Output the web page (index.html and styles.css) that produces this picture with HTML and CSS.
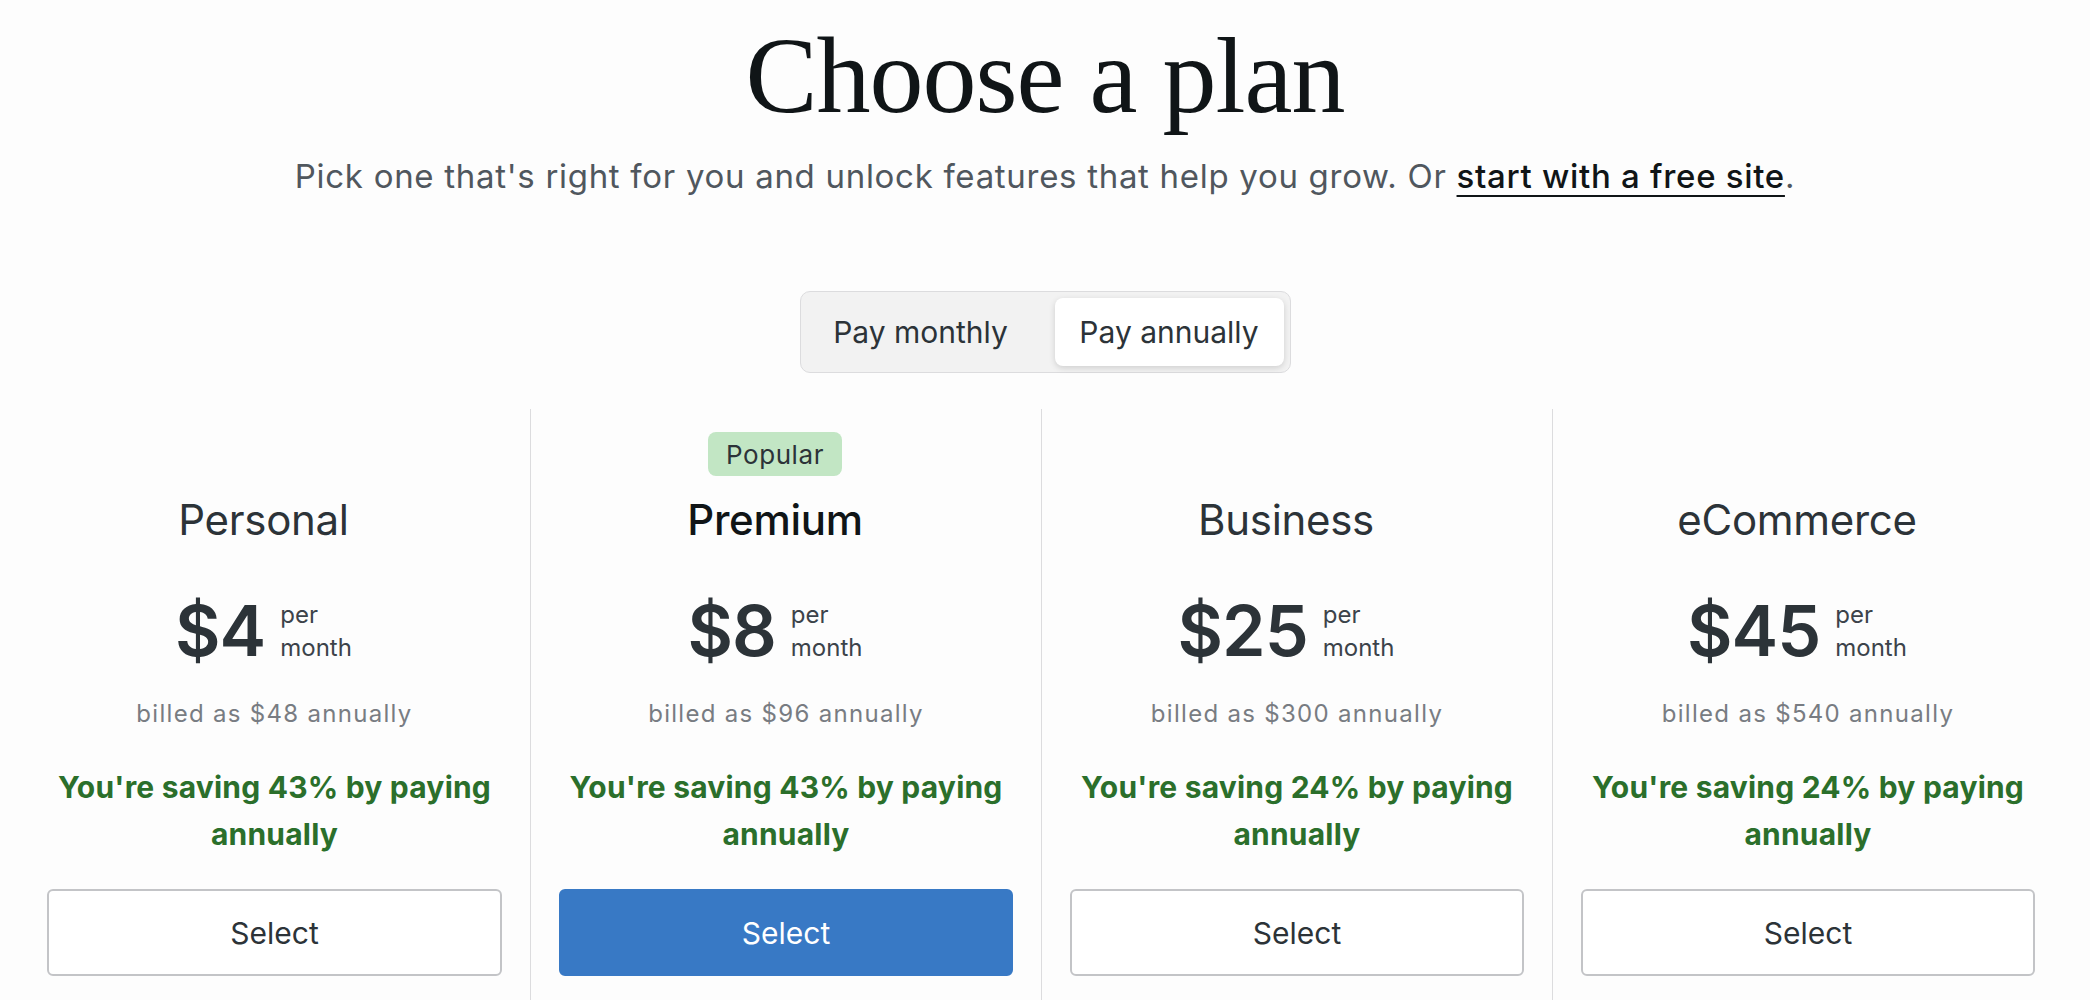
FILE: index.html
```html
<!DOCTYPE html>
<html lang="en">
<head>
<meta charset="utf-8">
<title>Choose a plan</title>
<link rel="stylesheet" href="styles.css">
</head>
<body>
<header class="intro">
  <h1 class="title">Choose a plan</h1>
  <p class="subtitle">Pick one that's right for you and unlock features that help you grow. Or <a class="link" href="#">start with a free site</a>.</p>
</header>
<div class="toggle-wrap">
  <div class="toggle">
    <button class="seg">Pay monthly</button>
    <button class="seg seg-active">Pay annually</button>
  </div>
</div>
<section class="plans">
  <div class="plan">
    <div class="badge-slot"></div>
    <h2 class="name">Personal</h2>
    <div class="price"><span class="amount">$4</span><span class="period">per<br>month</span></div>
    <p class="billed">billed as $48 annually</p>
    <p class="saving">You're saving 43% by paying annually</p>
    <button class="select">Select</button>
  </div>
  <div class="plan">
    <div class="badge-slot"><span class="badge">Popular</span></div>
    <h2 class="name name-strong">Premium</h2>
    <div class="price"><span class="amount">$8</span><span class="period">per<br>month</span></div>
    <p class="billed">billed as $96 annually</p>
    <p class="saving">You're saving 43% by paying annually</p>
    <button class="select select-primary">Select</button>
  </div>
  <div class="plan">
    <div class="badge-slot"></div>
    <h2 class="name">Business</h2>
    <div class="price"><span class="amount">$25</span><span class="period">per<br>month</span></div>
    <p class="billed">billed as $300 annually</p>
    <p class="saving">You're saving 24% by paying annually</p>
    <button class="select">Select</button>
  </div>
  <div class="plan">
    <div class="badge-slot"></div>
    <h2 class="name">eCommerce</h2>
    <div class="price"><span class="amount">$45</span><span class="period">per<br>month</span></div>
    <p class="billed">billed as $540 annually</p>
    <p class="saving">You're saving 24% by paying annually</p>
    <button class="select">Select</button>
  </div>
</section>
</body>
</html>
```
FILE: styles.css
```css
* { box-sizing: border-box; }
html, body { margin: 0; padding: 0; }
body {
  background: #fdfdfd;
  font-family: Inter, "Noto Sans", "Liberation Sans", sans-serif;
  color: #2c3338;
  width: 2090px;
  height: 1000px;
  overflow: hidden;
}
.intro { text-align: center; }
.title {
  font-family: "Liberation Serif", "DejaVu Serif", serif;
  font-weight: 400;
  font-size: 108px;
  line-height: 124px;
  margin: 14px 0 0;
  color: #101517;
  letter-spacing: -1px;
}
.subtitle {
  margin: 18px 0 0;
  font-size: 33px;
  line-height: 40px;
  color: #50575e;
  letter-spacing: 0.7px;
}
.link {
  color: #101517;
  font-weight: 500;
  text-decoration: underline;
  text-decoration-thickness: 2px;
  text-underline-offset: 7px;
}
.toggle-wrap {
  display: flex;
  justify-content: center;
  margin-top: 95px;
}
.toggle {
  display: flex;
  gap: 20px;
  padding: 6px;
  background: #f2f2f2;
  border: 1px solid #dcdcde;
  border-radius: 10px;
  width: 491px;
  height: 82px;
}
.seg {
  flex: 1;
  border: 0;
  background: transparent;
  font-family: inherit;
  font-size: 30px;
  color: #2c3338;
  border-radius: 8px;
  padding: 0;
}
.seg-active {
  flex: 0 0 229px;
  background: #ffffff;
  box-shadow: 0 2px 6px rgba(0, 0, 0, 0.15);
}
.plans {
  display: grid;
  grid-template-columns: repeat(4, 1fr);
  width: 2044px;
  margin: 36px 0 0 19px;
  height: 600px;
}
.plan {
  display: flex;
  flex-direction: column;
  align-items: center;
  padding: 23px 28px 0;
  text-align: center;
}
.plan + .plan { border-left: 1px solid #dcdcde; }
.badge-slot {
  height: 44px;
  display: flex;
  justify-content: center;
  margin-right: 22px;
}
.badge {
  display: inline-flex;
  align-items: center;
  height: 44px;
  padding: 0 18px;
  background: #c2e6c4;
  border-radius: 8px;
  font-size: 26px;
  letter-spacing: 0.6px;
  color: #2c3338;
}
.name {
  margin: 17px 22px 0 0;
  font-size: 42px;
  line-height: 54px;
  font-weight: 400;
  color: #2c3338;
  letter-spacing: -0.3px;
}
.name-strong { color: #101517; font-weight: 500; }
.price {
  display: flex;
  align-items: center;
  gap: 15px;
  margin: 46px 22px 0 0;
}
.amount {
  font-size: 70px;
  line-height: 76px;
  font-weight: 600;
  color: #2c3338;
  letter-spacing: -1px;
}
.period {
  text-align: left;
  font-size: 24px;
  line-height: 33px;
  color: #3c434a;
}
.billed {
  margin: 29px 0 0;
  font-size: 24px;
  line-height: 32px;
  color: #787c82;
  letter-spacing: 1.3px;
}
.saving {
  margin: 34px 0 0;
  font-size: 30px;
  line-height: 47px;
  font-weight: 700;
  color: #2b6f2b;
  letter-spacing: 0.2px;
  padding: 0 10px;
}
.select {
  margin-top: 31px;
  width: 100%;
  height: 87px;
  background: #ffffff;
  border: 2px solid #c3c4c7;
  border-radius: 6px;
  font-family: inherit;
  font-size: 30px;
  color: #2c3338;
}
.select-primary {
  background: #3879c5;
  border-color: #3879c5;
  color: #ffffff;
}
```
